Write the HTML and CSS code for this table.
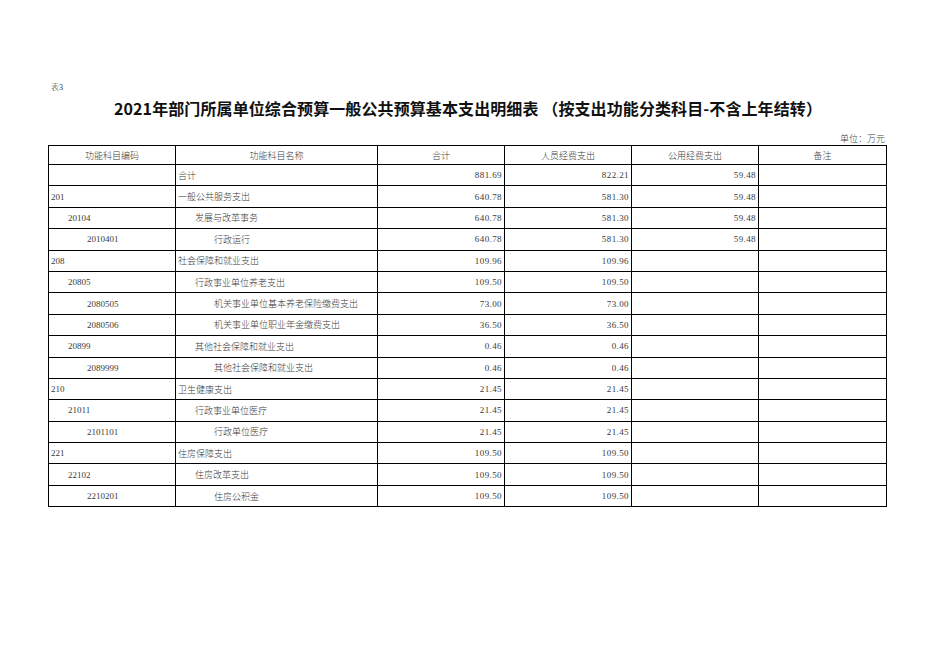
FILE: index.html
```html
<!DOCTYPE html>
<html lang="zh-CN">
<head>
<meta charset="utf-8">
<title>表3</title>
<link rel="stylesheet" href="styles.css">
</head>
<body>
<div class="page">
  <div class="note">表3</div>
  <h1 class="title">2021年部门所属单位综合预算一般公共预算基本支出明细表 （按支出功能分类科目-不含上年结转）</h1>
  <div class="unit">单位：万元</div>
  <table class="grid">
    <colgroup>
      <col class="c-code"><col class="c-name"><col class="c-num"><col class="c-num"><col class="c-num"><col class="c-note">
    </colgroup>
    <thead>
      <tr><th>功能科目编码</th><th>功能科目名称</th><th>合计</th><th>人员经费支出</th><th>公用经费支出</th><th>备注</th></tr>
    </thead>
    <tbody>
      <tr><td></td><td class="l1">合计</td><td class="n">881.69</td><td class="n">822.21</td><td class="n">59.48</td><td></td></tr>
      <tr><td class="l1">201</td><td class="l1">一般公共服务支出</td><td class="n">640.78</td><td class="n">581.30</td><td class="n">59.48</td><td></td></tr>
      <tr><td class="l2">20104</td><td class="l2">发展与改革事务</td><td class="n">640.78</td><td class="n">581.30</td><td class="n">59.48</td><td></td></tr>
      <tr><td class="l3">2010401</td><td class="l3">行政运行</td><td class="n">640.78</td><td class="n">581.30</td><td class="n">59.48</td><td></td></tr>
      <tr><td class="l1">208</td><td class="l1">社会保障和就业支出</td><td class="n">109.96</td><td class="n">109.96</td><td></td><td></td></tr>
      <tr><td class="l2">20805</td><td class="l2">行政事业单位养老支出</td><td class="n">109.50</td><td class="n">109.50</td><td></td><td></td></tr>
      <tr><td class="l3">2080505</td><td class="l3">机关事业单位基本养老保险缴费支出</td><td class="n">73.00</td><td class="n">73.00</td><td></td><td></td></tr>
      <tr><td class="l3">2080506</td><td class="l3">机关事业单位职业年金缴费支出</td><td class="n">36.50</td><td class="n">36.50</td><td></td><td></td></tr>
      <tr><td class="l2">20899</td><td class="l2">其他社会保障和就业支出</td><td class="n">0.46</td><td class="n">0.46</td><td></td><td></td></tr>
      <tr><td class="l3">2089999</td><td class="l3">其他社会保障和就业支出</td><td class="n">0.46</td><td class="n">0.46</td><td></td><td></td></tr>
      <tr><td class="l1">210</td><td class="l1">卫生健康支出</td><td class="n">21.45</td><td class="n">21.45</td><td></td><td></td></tr>
      <tr><td class="l2">21011</td><td class="l2">行政事业单位医疗</td><td class="n">21.45</td><td class="n">21.45</td><td></td><td></td></tr>
      <tr><td class="l3">2101101</td><td class="l3">行政单位医疗</td><td class="n">21.45</td><td class="n">21.45</td><td></td><td></td></tr>
      <tr><td class="l1">221</td><td class="l1">住房保障支出</td><td class="n">109.50</td><td class="n">109.50</td><td></td><td></td></tr>
      <tr><td class="l2">22102</td><td class="l2">住房改革支出</td><td class="n">109.50</td><td class="n">109.50</td><td></td><td></td></tr>
      <tr><td class="l3">2210201</td><td class="l3">住房公积金</td><td class="n">109.50</td><td class="n">109.50</td><td></td><td></td></tr>
    </tbody>
  </table>
</div>
</body>
</html>
```

FILE: styles.css
```css
html, body {
  margin: 0;
  padding: 0;
  background: #fff;
}

.page {
  width: 838px;
  padding: 83px 0 0 48px;
  font-family: "Liberation Serif", "Noto Sans CJK SC", serif;
  color: #333;
}

.note {
  font-size: 8px;
  line-height: 10px;
  padding-left: 3px;
  font-weight: 300;
}

.title {
  margin: 4px 0 0 0;
  font-family: "Noto Sans CJK SC", sans-serif;
  font-size: 16px;
  line-height: 22px;
  font-weight: 700;
  color: #111;
  text-align: center;
  padding-left: 2px;
  letter-spacing: 0.1px;
}

.unit {
  margin-top: 15px;
  text-align: right;
  font-size: 9px;
  line-height: 10px;
  padding-right: 1px;
  font-weight: 300;
  color: #444;
}

.grid {
  border-collapse: collapse;
  table-layout: fixed;
  width: 839px;
  margin-top: 1px;
  font-size: 9px;
}

.c-code { width: 127px; }
.c-name { width: 202px; }
.c-num { width: 127px; }
.c-note { width: 128px; }

.grid th,
.grid td {
  border: 1px solid #000;
  height: 20.4px;
  padding: 0 2px;
  white-space: nowrap;
  overflow: hidden;
  font-weight: 300;
  color: #3a3a3a;
}

.grid th {
  height: 18px;
  text-align: center;
}

.grid td.l1 { padding-left: 2px; }
.grid td.l2 { padding-left: 19px; }
.grid td.l3 { padding-left: 38px; }
.grid td.n {
  text-align: right;
  padding-right: 2px;
  letter-spacing: 0.4px;
}
```
